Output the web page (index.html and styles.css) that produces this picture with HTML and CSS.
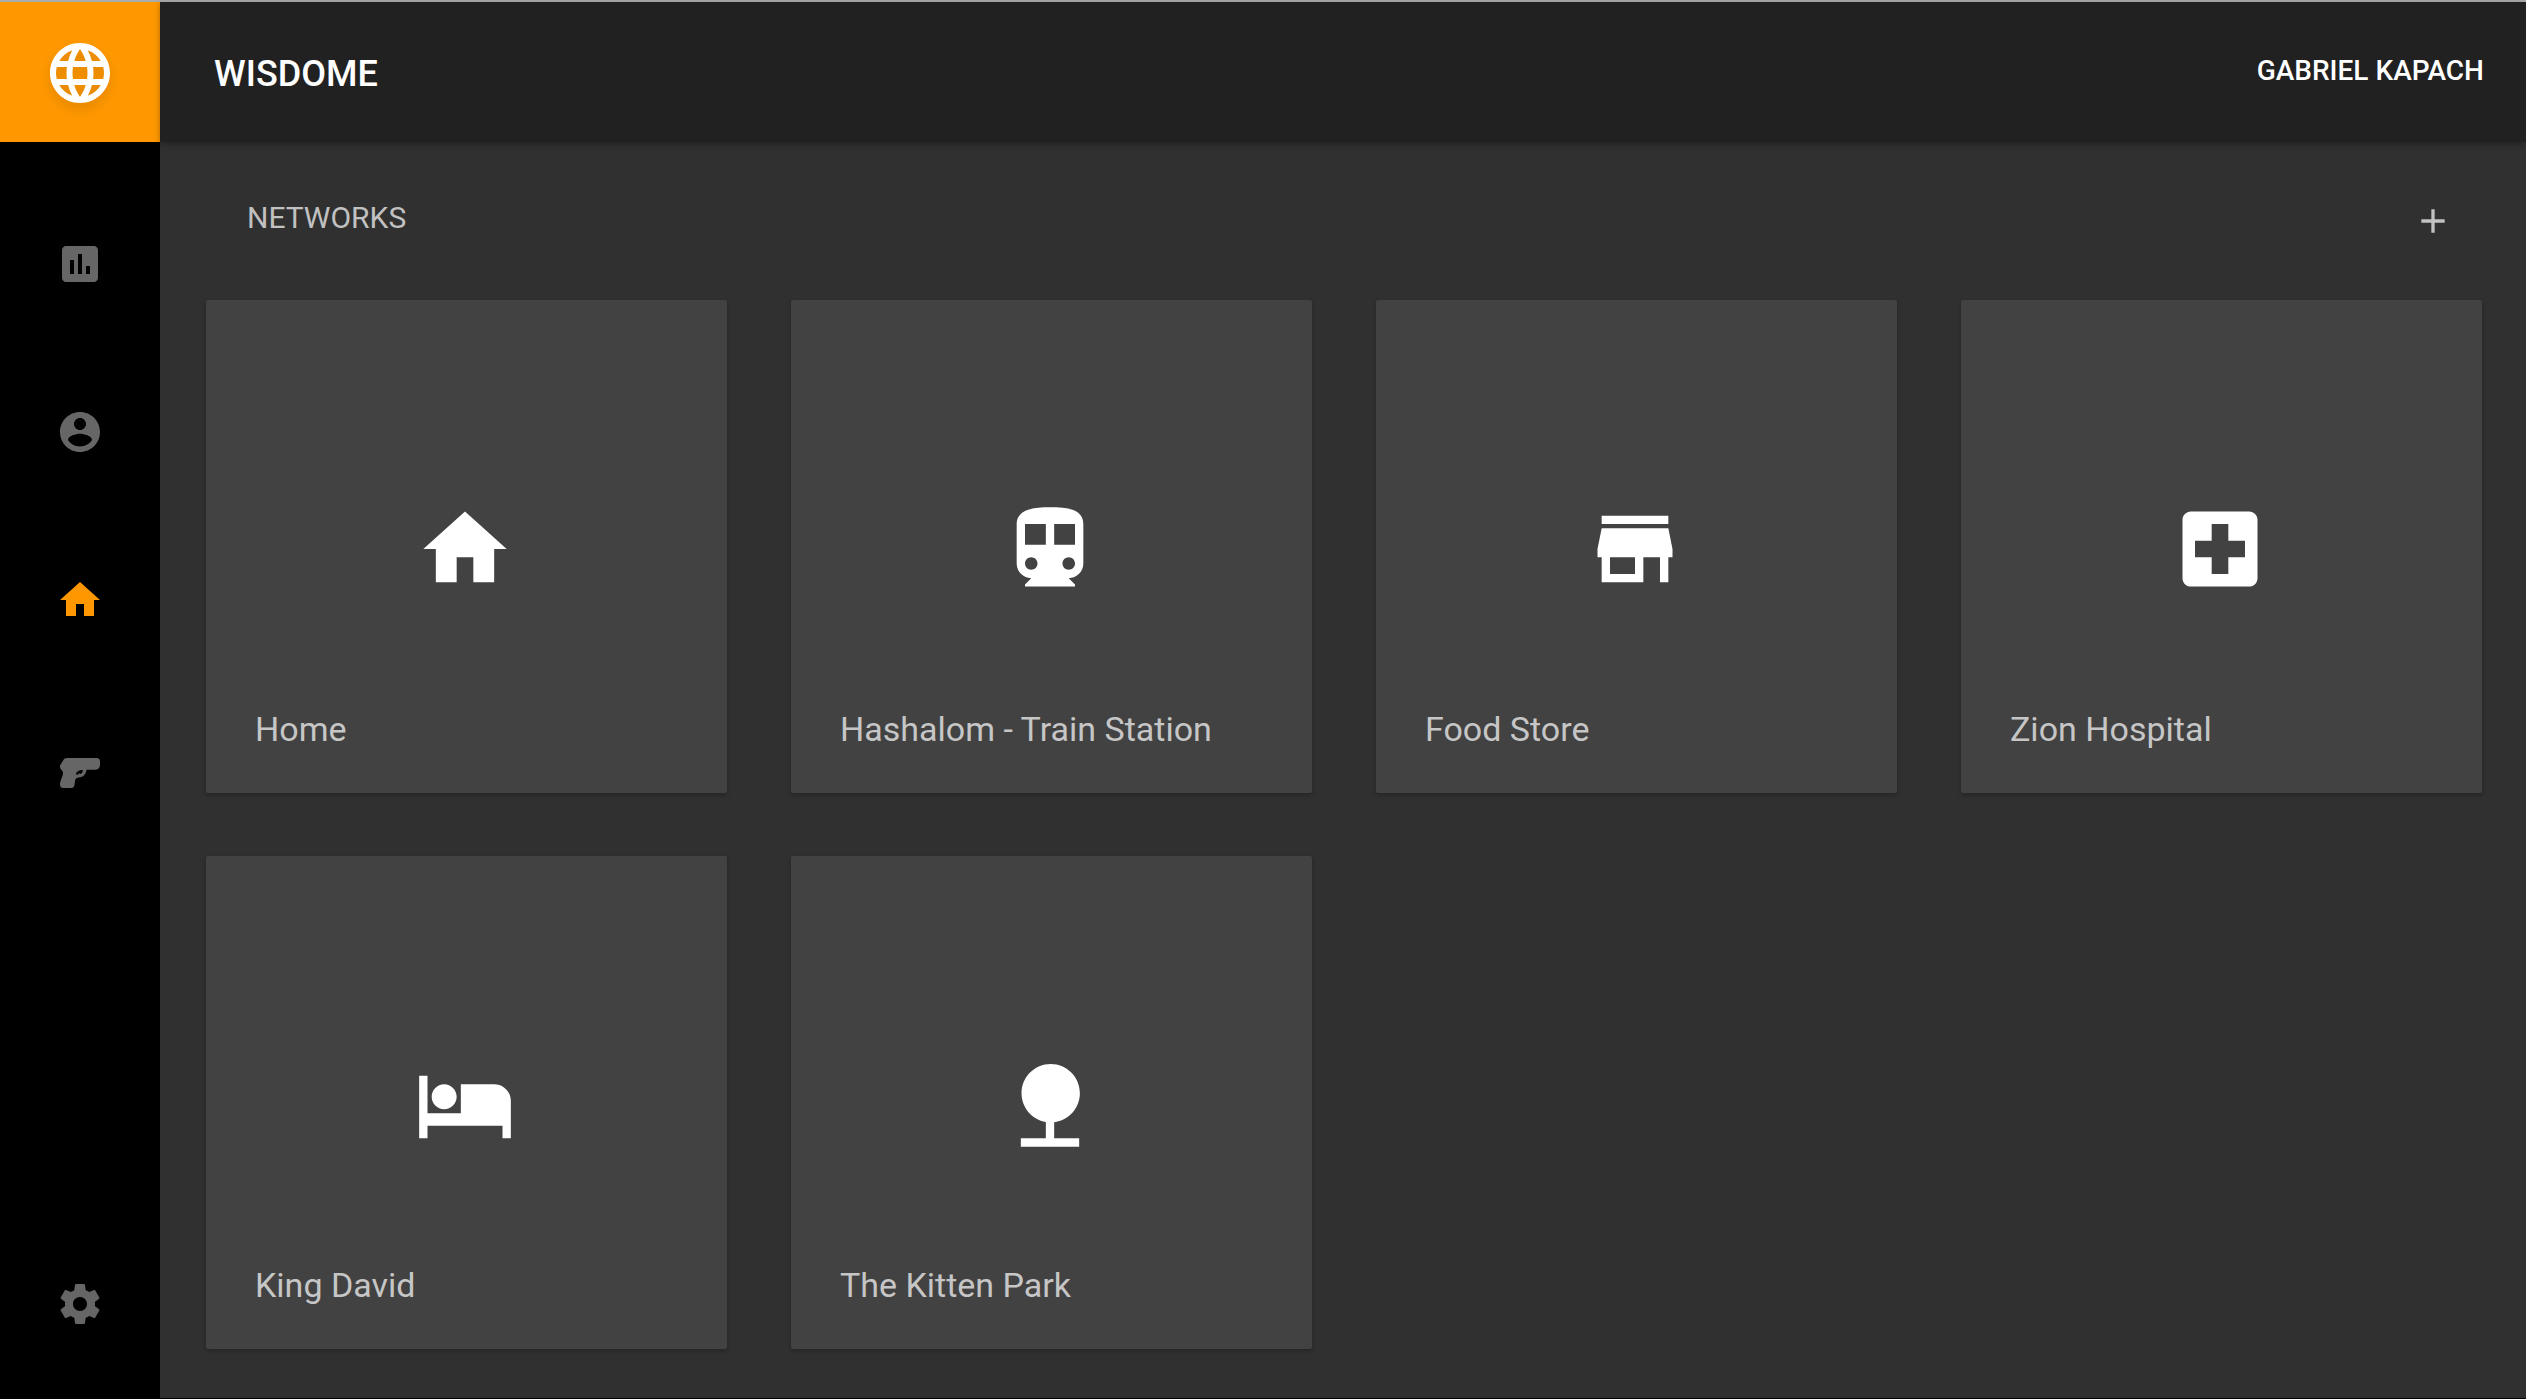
FILE: index.html
```html
<!DOCTYPE html>
<html lang="en">
<head>
<meta charset="utf-8">
<meta name="viewport" content="width=device-width, initial-scale=1">
<title>Wisdome</title>
<link rel="stylesheet" href="styles.css">
</head>
<body>
<div class="app">
  <div class="sidebar">
    <a class="logo" href="#" aria-label="Wisdome">
      <svg class="logo-icon" viewBox="0 0 24 24" aria-hidden="true"><path d="M11.99 2C6.47 2 2 6.48 2 12s4.47 10 9.99 10C17.52 22 22 17.52 22 12S17.52 2 11.99 2zm6.93 6h-2.95c-.32-1.25-.78-2.45-1.38-3.56 1.84.63 3.37 1.91 4.33 3.56zM12 4.04c.83 1.2 1.48 2.53 1.91 3.96h-3.82c.43-1.43 1.08-2.76 1.91-3.96zM4.26 14C4.1 13.36 4 12.69 4 12s.1-1.36.26-2h3.38c-.08.66-.14 1.32-.14 2 0 .68.06 1.34.14 2H4.26zm.82 2h2.95c.32 1.25.78 2.45 1.38 3.56-1.84-.63-3.37-1.9-4.33-3.56zm2.95-8H5.08c.96-1.66 2.49-2.93 4.33-3.56C8.81 5.55 8.35 6.75 8.03 8zM12 19.96c-.83-1.2-1.48-2.53-1.91-3.96h3.82c-.43 1.43-1.08 2.76-1.91 3.96zM14.34 14H9.66c-.09-.66-.16-1.32-.16-2 0-.68.07-1.35.16-2h4.68c.09.65.16 1.32.16 2 0 .68-.07 1.34-.16 2zm.25 5.56c.6-1.11 1.06-2.31 1.38-3.56h2.95c-.96 1.65-2.49 2.93-4.33 3.56zM16.36 14c.08-.66.14-1.32.14-2 0-.68-.06-1.34-.14-2h3.38c.16.64.26 1.31.26 2s-.1 1.36-.26 2h-3.38z"/></svg>
    </a>
    <nav class="nav" aria-label="Main">
      <a class="nav-item" href="#" aria-label="Statistics"><svg class="nav-icon" viewBox="0 0 24 24" aria-hidden="true"><path d="M19 3H5c-1.100 0-2 .9-2 2v14c0 1.100.9 2 2 2h14c1.100 0 2-.9 2-2V5c0-1.100-.9-2-2-2zM9 17H7v-7h2v7zm4 0h-2V7h2v10zm4 0h-2v-4h2v4z"/></svg></a>
      <a class="nav-item" href="#" aria-label="Account"><svg class="nav-icon" viewBox="0 0 24 24" aria-hidden="true"><path d="M12 2C6.480 2 2 6.480 2 12s4.480 10 10 10 10-4.480 10-10S17.520 2 12 2zm0 3c1.660 0 3 1.340 3 3s-1.340 3-3 3-3-1.340-3-3 1.340-3 3-3zm0 14.200c-2.500 0-4.710-1.280-6-3.220.03-1.990 4-3.080 6-3.080 1.990 0 5.970 1.090 6 3.080-1.290 1.940-3.500 3.220-6 3.220z"/></svg></a>
      <a class="nav-item active" href="#" aria-label="Networks" aria-current="page"><svg class="nav-icon" viewBox="0 0 24 24" aria-hidden="true"><path d="M10 20v-6h4v6h5v-8h3L12 3 2 12h3v8z"/></svg></a>
      <a class="nav-item" href="#" aria-label="Weapons"><svg class="nav-icon" viewBox="0 0 48 48" aria-hidden="true"><path fill-rule="evenodd" d="M11 14H40.500C43 14 44 15.500 44 17V20.500C44 23.500 42.500 25.700 39.500 25.700H30.500C30 30 27.500 33.300 22.500 33.500C20 33.800 19.300 35 19 37L18.500 41Q18 44 15.500 44H7.500Q4 44 4 40.500C4 36 7 33 7 28.500C7 26.500 4 25.500 4 22.500C4 20.500 5.500 19.500 6.500 17.500C7.500 15 9 14 11 14ZM26.800 26C24 25.600 20.500 27 19.600 30.600L22.800 30.400L22.300 28.400L24 30C26 29.400 27 28 26.800 26Z"/></svg></a>
      <a class="nav-item nav-last" href="#" aria-label="Settings"><svg class="nav-icon" viewBox="0 0 24 24" aria-hidden="true"><path d="M19.430 12.980c.04-.32.07-.64.07-.98s-.03-.66-.07-.98l2.110-1.650c.19-.15.24-.42.12-.64l-2-3.460c-.12-.22-.39-.3-.61-.22l-2.490 1c-.52-.4-1.080-.73-1.690-.98l-.38-2.650C14.460 2.180 14.250 2 14 2h-4c-.25 0-.46.18-.49.42l-.38 2.650c-.61.25-1.170.59-1.690.98l-2.490-1c-.23-.09-.49 0-.61.22l-2 3.460c-.13.22-.07.49.12.64l2.110 1.650c-.04.32-.07.65-.07.98s.03.66.07.98l-2.110 1.650c-.19.15-.24.42-.12.64l2 3.460c.12.22.39.3.61.22l2.490-1c.52.4 1.080.73 1.690.98l.38 2.650c.03.24.24.42.49.42h4c.25 0 .46-.18.49-.42l.38-2.650c.61-.25 1.170-.59 1.690-.98l2.490 1c.23.09.49 0 .61-.22l2-3.460c.12-.22.07-.49-.12-.64l-2.110-1.650zM12 15.500c-1.930 0-3.500-1.570-3.500-3.500s1.570-3.500 3.500-3.500 3.500 1.570 3.500 3.500-1.570 3.500-3.500 3.500z"/></svg></a>
    </nav>
  </div>
  <div class="page">
    <header class="topbar">
      <h1 class="brand">WISDOME</h1>
      <button class="user" type="button">GABRIEL KAPACH</button>
    </header>
    <main class="content">
      <div class="section-head">
        <h2 class="section-title">NETWORKS</h2>
        <button class="add" type="button" aria-label="Add network"><svg class="add-icon" viewBox="0 0 24 24" aria-hidden="true"><path d="M19 13h-6v6h-2v-6H5v-2h6V5h2v6h6v2z"/></svg></button>
      </div>
      <div class="cards">
        <a class="card" href="#"><svg class="card-icon" viewBox="0 0 24 24" aria-hidden="true"><path d="M10 20v-6h4v6h5v-8h3L12 3 2 12h3v8z"/></svg><span class="card-label">Home</span></a>
        <a class="card" href="#"><svg class="card-icon" viewBox="0 0 24 24" aria-hidden="true"><path d="M12 2c-4 0-8 .5-8 4v9.500C4 17.430 5.570 19 7.500 19L6 20.500v.5h12v-.5L16.500 19c1.930 0 3.500-1.570 3.500-3.500V6c0-3.500-3.580-4-8-4zM7.500 17c-.83 0-1.500-.67-1.500-1.500S6.670 14 7.500 14s1.500.67 1.500 1.500S8.330 17 7.500 17zm3.500-6H6V6h5v5zm2 0V6h5v5h-5zm3.500 6c-.83 0-1.500-.67-1.500-1.500s.67-1.500 1.500-1.500 1.500.67 1.500 1.500-.67 1.500-1.500 1.500z"/></svg><span class="card-label">Hashalom - Train Station</span></a>
        <a class="card" href="#"><svg class="card-icon" viewBox="0 0 24 24" aria-hidden="true"><path d="M20 4H4v2h16V4zm1 10v-2l-1-5H4l-1 5v2h1v6h10v-6h4v6h2v-6h1zm-9 4H6v-4h6v4z"/></svg><span class="card-label">Food Store</span></a>
        <a class="card" href="#"><svg class="card-icon" viewBox="0 0 24 24" aria-hidden="true"><path d="M19 3H5c-1.100 0-2 .9-2 2v14c0 1.100.9 2 2 2h14c1.100 0 2-.9 2-2V5c0-1.100-.9-2-2-2zm-1 11h-4v4h-4v-4H6v-4h4V6h4v4h4v4z"/></svg><span class="card-label">Zion Hospital</span></a>
        <a class="card" href="#"><svg class="card-icon" viewBox="0 0 24 24" aria-hidden="true"><path d="M7 13c1.660 0 3-1.340 3-3S8.660 7 7 7s-3 1.340-3 3 1.340 3 3 3zm12-6h-8v7H3V5H1v15h2v-3h18v3h2v-9c0-2.210-1.790-4-4-4z"/></svg><span class="card-label">King David</span></a>
        <a class="card" href="#"><svg class="card-icon" viewBox="0 0 24 24" aria-hidden="true"><path d="M13 16.120c3.470-.41 6.170-3.360 6.170-6.950 0-3.870-3.130-7-7-7s-7 3.130-7 7c0 3.470 2.520 6.340 5.830 6.890V20H5v2h14v-2h-6v-3.880z"/></svg><span class="card-label">The Kitten Park</span></a>
      </div>
    </main>
  </div>
</div>
</body>
</html>
```
FILE: styles.css
```css
* {
  box-sizing: border-box;
}

body {
  margin: 0;
  background: #000;
  color: #fff;
  font-family: Roboto, "Liberation Sans", sans-serif;
}

svg {
  display: block;
  fill: currentColor;
}

a {
  color: inherit;
  text-decoration: none;
}

button {
  padding: 0;
  border: 0;
  background: none;
  color: inherit;
  font: inherit;
  cursor: pointer;
}

.app {
  display: flex;
  min-height: 100vh;
  border-top: 2px solid #a9abac;
  border-bottom: 1px solid #000;
}

.sidebar {
  display: flex;
  flex: 0 0 160px;
  flex-direction: column;
  background: #000;
}

.logo {
  display: flex;
  flex: 0 0 140px;
  align-items: center;
  justify-content: center;
  padding-top: 2px;
  background: #ff9800;
}

.logo-icon {
  width: 72px;
  height: 72px;
  filter: drop-shadow(0 6px 6px rgba(0, 0, 0, 0.12));
}

.nav {
  display: flex;
  flex: 1;
  flex-direction: column;
  padding: 38px 0 10px;
  color: #666;
}

.nav-item {
  display: flex;
  flex: 0 0 168px;
  align-items: center;
  justify-content: center;
}

.nav-icon {
  width: 48px;
  height: 48px;
}

.active {
  color: #ff9800;
}

.nav-last {
  margin-top: auto;
}

.page {
  display: flex;
  flex: 1;
  flex-direction: column;
  min-width: 0;
  background: #303030;
}

.topbar {
  display: flex;
  align-items: center;
  justify-content: space-between;
  height: 140px;
  padding: 0 42px 0 54px;
  background: #212121;
  box-shadow: 0 2px 6px rgba(0, 0, 0, 0.3);
}

.brand {
  margin: 0;
  padding-top: 4px;
  font-size: 36px;
  font-weight: 500;
  line-height: 40px;
}

.user {
  padding-bottom: 2px;
  font-size: 28px;
  font-weight: 500;
  line-height: 40px;
}

.content {
  padding: 56px 44px 48px 46px;
}

.section-head {
  display: flex;
  justify-content: space-between;
  margin-bottom: 59px;
  padding: 0 29px 0 41px;
  color: #c1c1c1;
}

.section-title {
  margin: 0;
  font-size: 30px;
  font-weight: 400;
  line-height: 40px;
}

.add {
  padding-top: 3px;
}

.add-icon {
  width: 40px;
  height: 40px;
}

.cards {
  display: grid;
  grid-template-columns: repeat(4, 1fr);
  grid-auto-rows: minmax(493px, auto);
  gap: 63px 64px;
}

.card {
  display: flex;
  flex-direction: column;
  justify-content: space-between;
  padding: 199px 52px 44px 49px;
  border-radius: 2px;
  background: #424242;
  box-shadow: 0 2px 4px rgba(0, 0, 0, 0.24);
}

.card-icon {
  align-self: center;
  width: 100px;
  height: 100px;
}

.card-label {
  color: #c6c6c6;
  font-size: 34px;
  line-height: 40px;
}
```
